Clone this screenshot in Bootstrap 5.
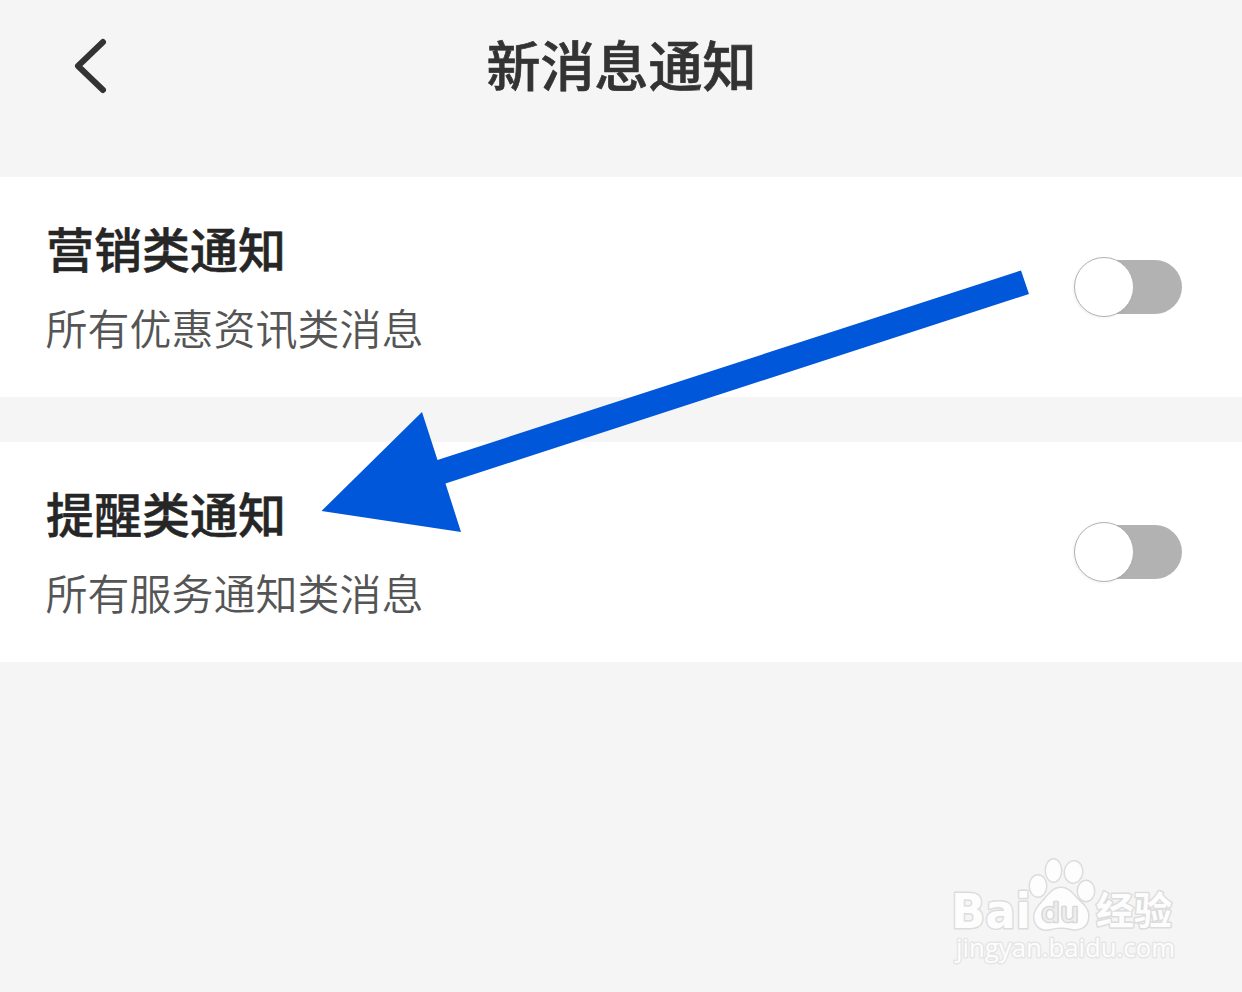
<!DOCTYPE html>
<html lang="zh-CN">
<head>
  <meta charset="UTF-8" />
  <meta name="viewport" content="width=device-width, initial-scale=1.0"/>
  <title>新消息通知</title>

  <!-- Bootstrap CSS -->
  <link href="https://cdn.jsdelivr.net/npm/bootstrap@5.3.3/dist/css/bootstrap.min.css" rel="stylesheet" />

  <style>
    body {
      min-height: 992px;
      background-color: #f5f5f5;
      font-family: "Noto Sans CJK SC", sans-serif;
      overflow: hidden;
    }
    .top-bar {
      height: 177px;
      padding: 24px 0 0 1px;
    }
    .back-btn {
      left: 72px;
      top: 36px;
      line-height: 0;
    }
    .page-title {
      font-size: 54px;
      font-weight: 500;
      line-height: 80px;
      color: #333;
      -webkit-text-stroke: .7px #333;
    }
    .notice-list {
      gap: 45px;
    }
    .notice-item {
      height: 220px;
      padding: 0 60px 0 45px;
    }
    .notice-name {
      font-size: 48px;
      font-weight: 500;
      line-height: 70px;
      padding-left: 1px;
      color: #262626;
      -webkit-text-stroke: .5px #262626;
    }
    .notice-desc {
      font-size: 42px;
      font-weight: 350;
      line-height: 62px;
      margin-top: 14px;
      padding-left: .5px;
      color: #555;
    }
    .notice-text {
      padding-top: 35px;
    }
    .switch-track {
      width: 100px;
      height: 54px;
      border: 0;
      border-radius: 27px;
      background-color: #b2b2b2;
    }
    .switch-thumb {
      left: -8px;
      top: -3px;
      width: 60px;
      height: 60px;
      border: 1.5px solid #b2b2b2;
      box-shadow: -1px 1px 3px rgba(0, 0, 0, .06);
    }
    .overlay {
      pointer-events: none;
    }
  </style>
</head>
<body class="position-relative">

  <!-- Cabeçalho -->
  <header class="top-bar position-relative text-center">
    <a class="back-btn position-absolute" href="#" aria-label="返回">
      <svg width="38" height="60" viewBox="0 0 38 60" fill="none" stroke="#333" stroke-width="6" stroke-linecap="round" stroke-linejoin="round">
        <path d="M31 6 L6 30 L31 54" />
      </svg>
    </a>
    <h1 class="page-title m-0">新消息通知</h1>
  </header>

  <!-- Lista de notificações -->
  <main class="notice-list d-flex flex-column">
    <section class="notice-item bg-white d-flex justify-content-between align-items-center">
      <div class="notice-text align-self-start">
        <h2 class="notice-name m-0">营销类通知</h2>
        <p class="notice-desc mb-0">所有优惠资讯类消息</p>
      </div>
      <button type="button" class="switch-track position-relative p-0" role="switch" aria-checked="false" aria-label="营销类通知">
        <span class="switch-thumb position-absolute rounded-circle bg-white"></span>
      </button>
    </section>

    <section class="notice-item bg-white d-flex justify-content-between align-items-center">
      <div class="notice-text align-self-start">
        <h2 class="notice-name m-0">提醒类通知</h2>
        <p class="notice-desc mb-0">所有服务通知类消息</p>
      </div>
      <button type="button" class="switch-track position-relative p-0" role="switch" aria-checked="false" aria-label="提醒类通知">
        <span class="switch-thumb position-absolute rounded-circle bg-white"></span>
      </button>
    </section>
  </main>

  <!-- Seta e marca d'água -->
  <svg class="overlay position-absolute top-0 start-0" width="1242" height="992" viewBox="0 0 1242 992">
    <path d="M321.5 511 L422 412 L437.5 460 L1021 270.5 L1029 294 L445.5 483.5 L461 532 Z" fill="#0057d9" />

    <g fill="#fdfdfd" stroke="#dcdcdc" stroke-width="3" paint-order="stroke" stroke-linejoin="round">
      <ellipse cx="1038" cy="886" rx="8" ry="10.5" />
      <ellipse cx="1053.5" cy="870.5" rx="7.5" ry="11" />
      <ellipse cx="1073.5" cy="872" rx="8.5" ry="10.5" transform="rotate(8 1073.5 872)" />
      <ellipse cx="1086" cy="891" rx="8" ry="10" />
      <path d="M1061 888 C1068 888 1072 893 1077 899 C1084 905 1089 910 1088 918 C1087 927 1080 930 1072 929 C1064 927 1057 927 1050 929 C1041 931 1035 926 1034.5 918 C1034 910 1040 905 1045 899 C1050 893 1054 888 1061 888 Z" />
      <text x="951" y="927.5" font-family="DejaVu Sans, sans-serif" font-weight="700" font-size="48" textLength="80" lengthAdjust="spacingAndGlyphs">Bai</text>
      <text x="1041" y="922" font-family="DejaVu Sans, sans-serif" font-size="26" textLength="38" lengthAdjust="spacingAndGlyphs" fill="#ededed" stroke="#d6d6d6" stroke-width="2.5">du</text>
      <text x="1096" y="924" font-family="Noto Sans CJK SC, sans-serif" font-weight="700" font-size="38" textLength="76" lengthAdjust="spacingAndGlyphs">经验</text>
      <text x="956" y="957" font-family="Open Sans, sans-serif" font-size="26" textLength="219" lengthAdjust="spacingAndGlyphs" stroke="#e6e6e6">jingyan.baidu.com</text>
    </g>
  </svg>

  <!-- Bootstrap JS -->
  <script src="https://cdn.jsdelivr.net/npm/bootstrap@5.3.3/dist/js/bootstrap.bundle.min.js"></script>
</body>
</html>
